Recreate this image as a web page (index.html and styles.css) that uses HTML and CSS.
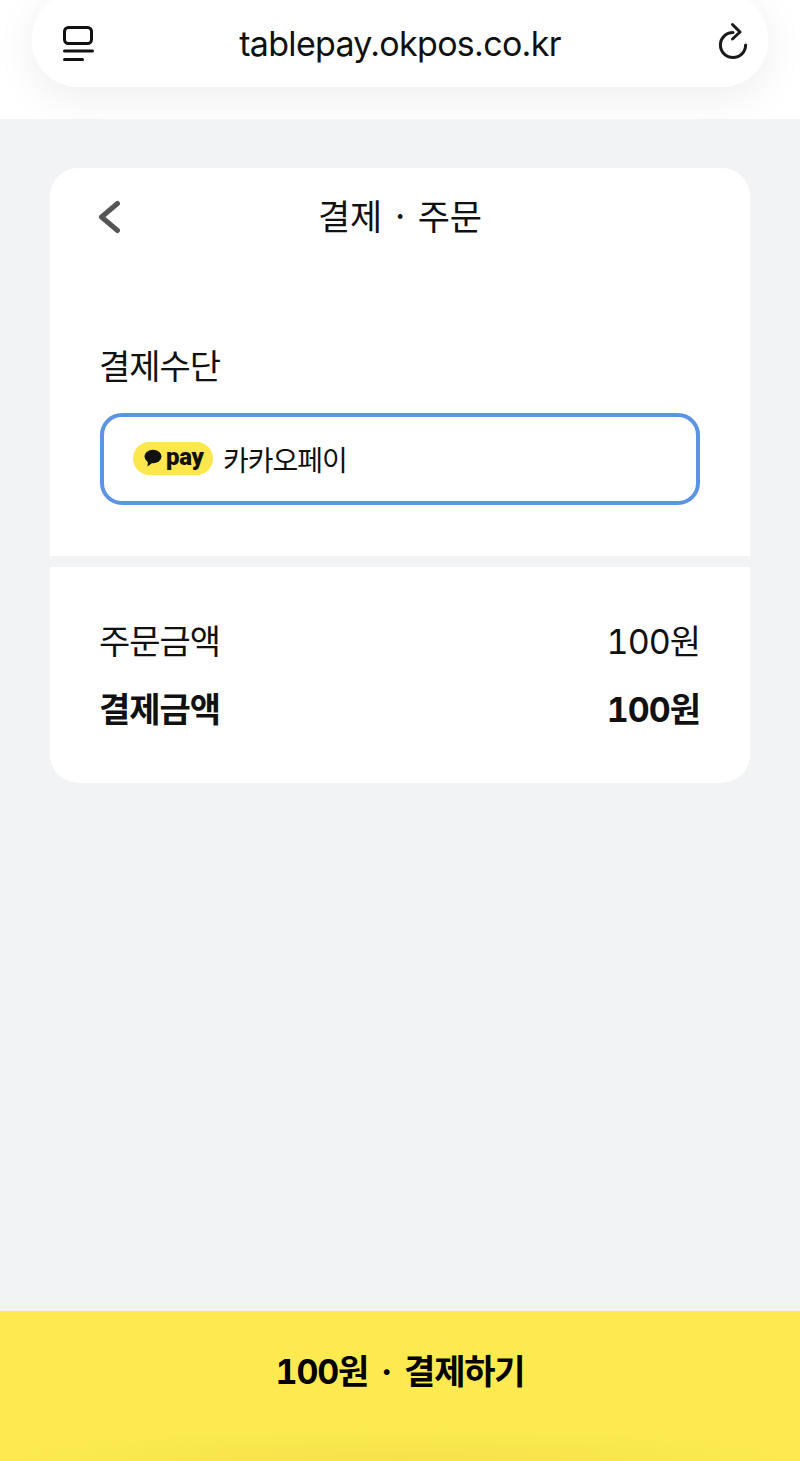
FILE: index.html
```html
<!DOCTYPE html>
<html lang="ko">
<head>
<meta charset="utf-8">
<title>결제 · 주문</title>
<link rel="stylesheet" href="styles.css">
</head>
<body>
<div class="page">
  <header class="browser">
    <div class="pill">
      <svg class="tabs-icon" width="32" height="38" viewBox="0 0 32 38" fill="none" stroke="#111" stroke-width="3" stroke-linecap="round">
        <rect x="2.500" y="2.500" width="27" height="16" rx="4"/>
        <path d="M2.500 26H30.500"/>
        <path d="M2.500 34.500H20.500"/>
      </svg>
      <span class="url">tablepay.okpos.co.kr</span>
      <svg class="reload-icon" width="32" height="38" viewBox="0 0 32 38" fill="none" stroke="#1a1a1a" stroke-width="3" stroke-linecap="round" stroke-linejoin="round">
        <path d="M17 10.400A12.600 12.600 0 1 0 29.600 23"/>
        <path d="M16.500 2.500L24 10l-7.500 7"/>
      </svg>
    </div>
  </header>
  <main class="content">
    <section class="card">
      <div class="card-head">
        <svg class="back" width="24" height="34" viewBox="0 0 24 34" fill="none" stroke="#555" stroke-width="5" stroke-linecap="round" stroke-linejoin="round">
          <path d="M19.500 3.500L3.500 17l16 13.500"/>
        </svg>
        <h1 class="title">결제 · 주문</h1>
      </div>
      <div class="method">
        <h2 class="label">결제수단</h2>
        <div class="select">
          <span class="kpay">
            <svg width="18" height="18" viewBox="0 0 18 18" fill="#111"><ellipse cx="9" cy="7.500" rx="8.500" ry="6.800"/><path d="M4 11.500L3.500 17.500 9.500 13z"/></svg>
            <span class="kpay-text">pay</span>
          </span>
          <span class="method-name">카카오페이</span>
        </div>
      </div>
      <div class="divider"></div>
      <div class="summary">
        <div class="row"><span>주문금액</span><span>100원</span></div>
        <div class="row total"><span>결제금액</span><span>100원</span></div>
      </div>
    </section>
  </main>
  <footer class="pay-bar">100원 · 결제하기</footer>
</div>
</body>
</html>
```
FILE: styles.css
```css
* { box-sizing: border-box; }
html, body { margin: 0; padding: 0; }
body {
  font-family: "Noto Sans CJK KR", "Noto Sans", sans-serif;
  color: #111;
  background: #f1f3f5;
}
.page {
  width: 800px;
  height: 1461px;
  display: flex;
  flex-direction: column;
  overflow: hidden;
}
.browser {
  height: 119px;
  flex: none;
  background: #fff;
  padding: 0 32px;
  overflow: hidden;
}
.pill {
  height: 95px;
  margin-top: -8px;
  padding: 8px 20px 0;
  background: #fff;
  border-radius: 46px;
  box-shadow: 0 10px 44px rgba(0, 0, 0, 0.07);
  display: grid;
  grid-template-columns: 1fr auto 1fr;
  align-items: center;
}
.tabs-icon { justify-self: start; margin: 1px 0 0 10px; }
.reload-icon { justify-self: end; margin-top: -5px; }
.url {
  font-family: "Inter", "Liberation Sans", sans-serif;
  font-size: 34px;
  letter-spacing: -0.7px;
  color: #111;
}
.content {
  flex: 1;
  padding: 49px 50px 0;
}
.card {
  background: #fff;
  border-radius: 28px;
  height: 615px;
  overflow: hidden;
}
.card-head {
  height: 98px;
  position: relative;
  display: flex;
  justify-content: center;
  align-items: center;
}
.back { position: absolute; left: 48px; top: 32px; }
.title {
  margin: -4px 0 0;
  font-size: 35px;
  font-weight: 400;
  line-height: 96px;
  letter-spacing: -0.2px;
  word-spacing: 3.500px;
}
.method { padding: 79px 50px 52px; height: 290px; }
.label {
  margin: 0 0 0 -1px;
  font-size: 34px;
  font-weight: 400;
  line-height: 40px;
  letter-spacing: -1px;
}
.select {
  margin-top: 28px;
  height: 92px;
  border: 4px solid #5c94e4;
  border-radius: 22px;
  display: flex;
  align-items: center;
  padding-left: 29px;
  gap: 10px;
}
.kpay {
  width: 80px;
  height: 33px;
  margin-top: -2px;
  background: #fde74c;
  border-radius: 17px;
  display: flex;
  align-items: center;
  padding-left: 11px;
  gap: 4px;
}
.kpay-text {
  font-family: "Roboto", sans-serif;
  font-weight: 900;
  font-size: 24px;
  letter-spacing: -0.3px;
  line-height: 28px;
  margin-top: -3px;
}
.method-name {
  font-size: 28px;
  letter-spacing: -1px;
}
.divider { height: 11px; background: #f1f3f5; }
.summary { padding: 47px 50px 0 49px; }
.row {
  display: flex;
  justify-content: space-between;
  align-items: center;
  font-family: "Inter", "Noto Sans CJK KR", sans-serif;
  font-feature-settings: "tnum";
  font-size: 34px;
  line-height: 56px;
  letter-spacing: -1px;
}
.total { font-weight: 700; margin-top: 12px; }
.pay-bar {
  height: 150px;
  flex: none;
  background:
    radial-gradient(ellipse 50% 34px at 50% 100%, #f6e24b, rgba(246, 226, 75, 0)),
    #fcea50;
  display: flex;
  justify-content: center;
  align-items: center;
  padding-bottom: 34px;
  font-family: "Inter", "Noto Sans CJK KR", sans-serif;
  font-feature-settings: "tnum";
  font-size: 34px;
  font-weight: 700;
  letter-spacing: -1.200px;
  word-spacing: 5px;
  color: #000;
}
```
